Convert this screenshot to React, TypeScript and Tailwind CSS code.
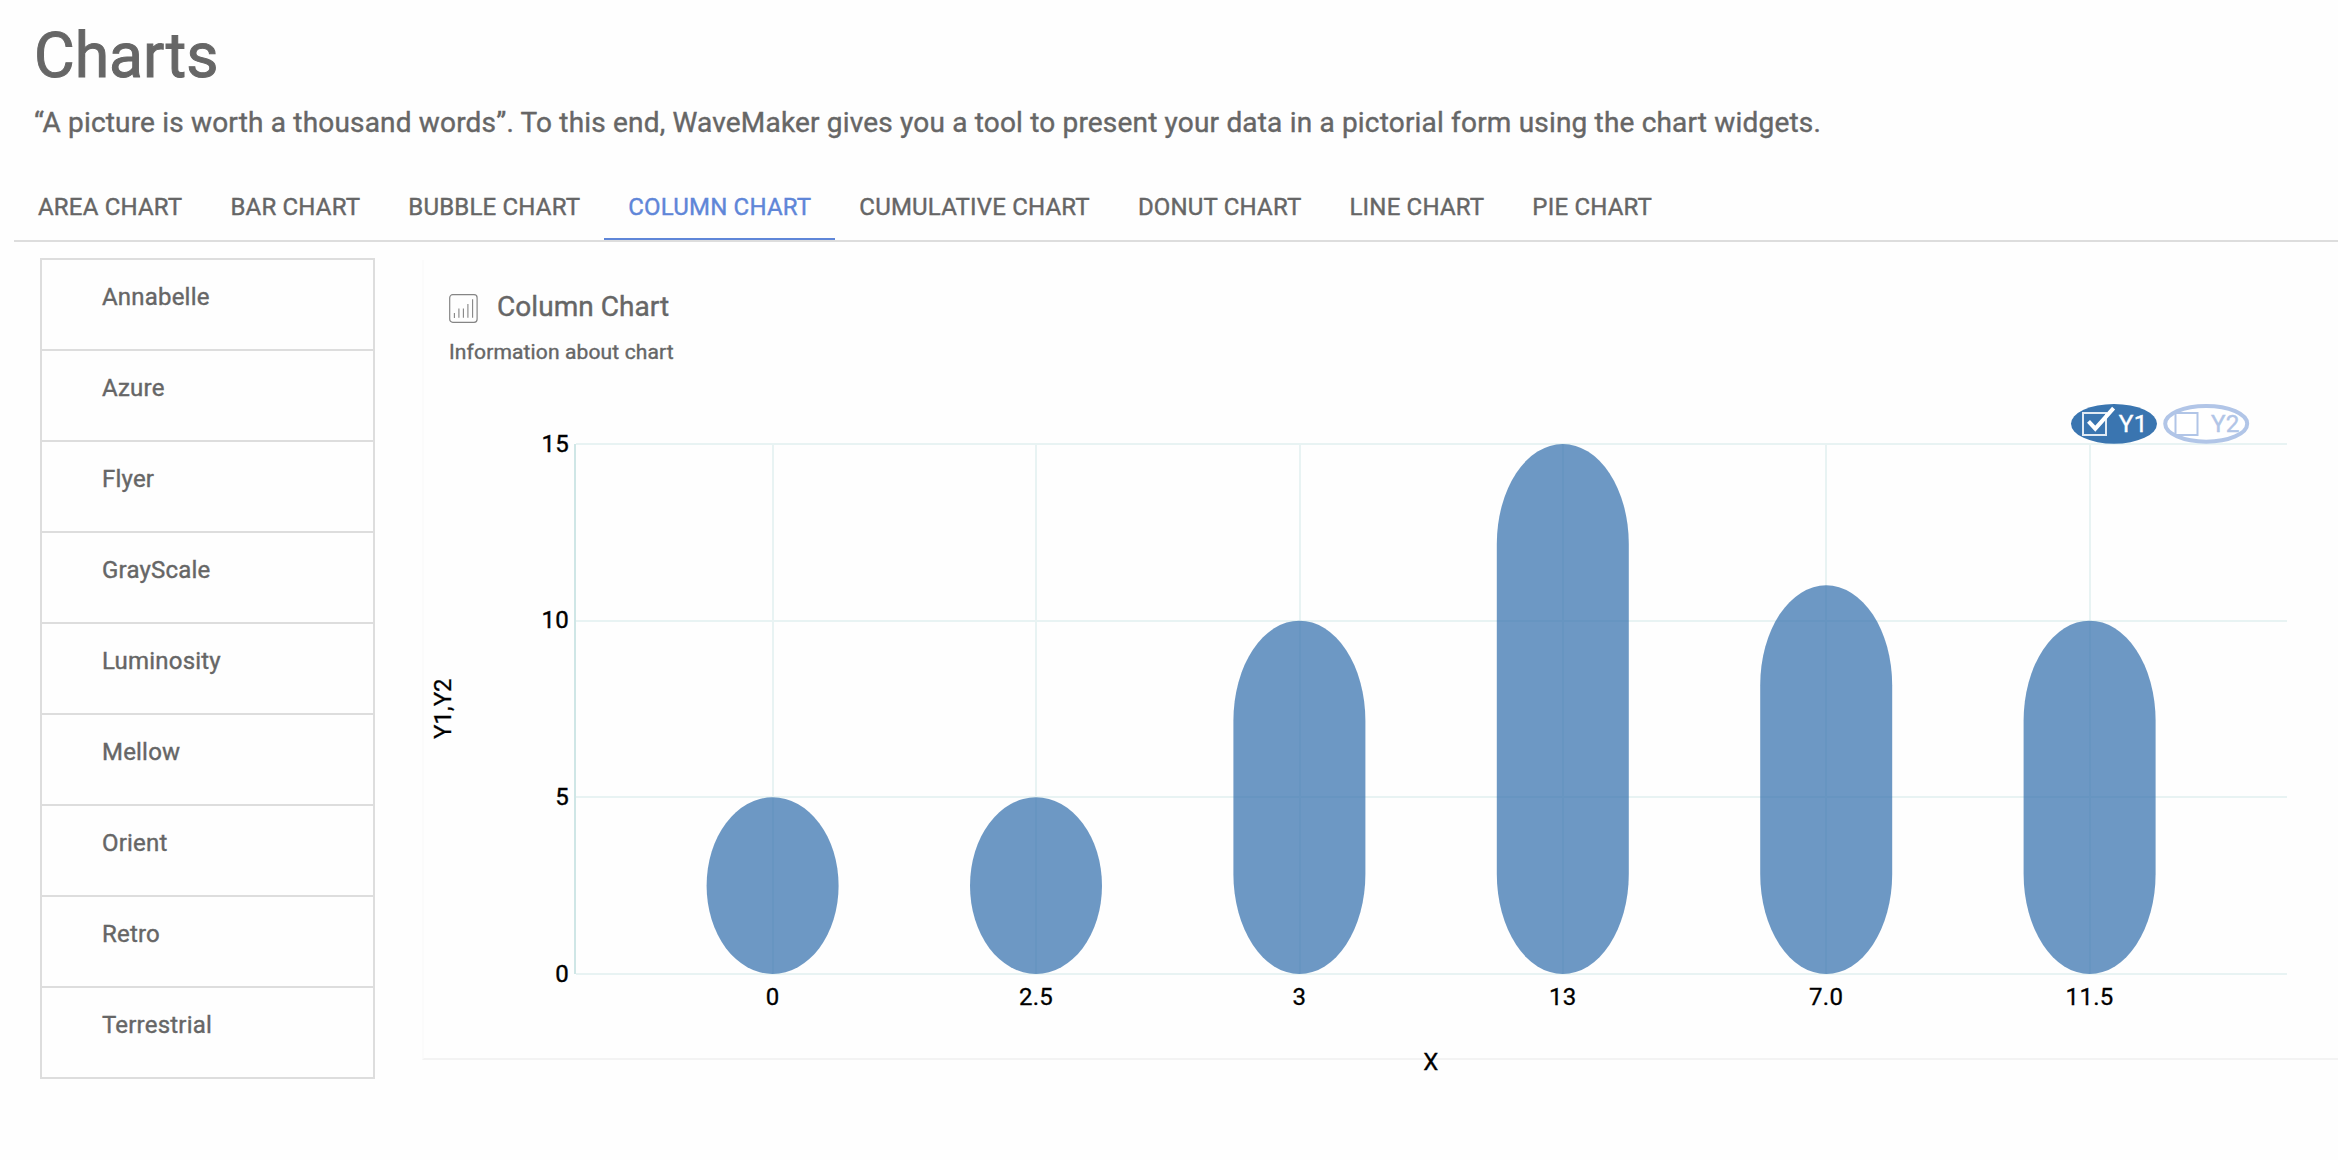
import React from 'react';

const tabs = [
  'AREA CHART',
  'BAR CHART',
  'BUBBLE CHART',
  'COLUMN CHART',
  'CUMULATIVE CHART',
  'DONUT CHART',
  'LINE CHART',
  'PIE CHART',
];

const themes = ['Annabelle', 'Azure', 'Flyer', 'GrayScale', 'Luminosity', 'Mellow', 'Orient', 'Retro', 'Terrestrial'];

const columns = [
  { label: '0', value: 5 },
  { label: '2.5', value: 5 },
  { label: '3', value: 10 },
  { label: '13', value: 15 },
  { label: '7.0', value: 11 },
  { label: '11.5', value: 10 },
];

const ticks = [15, 10, 5, 0];

const yOf = (v: number) => 974 - (v * 530) / 15;
const xOf = (i: number) => 772.8 + i * 263.4;

function TabBar({ active }: { active: string }) {
  return (
    <nav className="ml-3.5 mt-[29px] flex border-b-2 border-[#dddddd]">
      {tabs.map((t) => (
        <a
          key={t}
          className={
            t === active
              ? 'border-b-2 border-[#5f86d8] px-6 pb-[13px] pt-[17px] text-2xl leading-9 tracking-[0.19px] text-[#5f86d8]'
              : 'border-b-2 border-transparent px-6 pb-[13px] pt-[17px] text-2xl leading-9 tracking-[0.19px]'
          }
        >
          {t}
        </a>
      ))}
    </nav>
  );
}

function ChartIcon() {
  return (
    <svg className="mt-[7px] shrink-0" width="29" height="29" viewBox="0 0 29 29" fill="none" stroke="#858585">
      <rect x="0.7" y="0.7" width="27.4" height="27.6" rx="3" strokeWidth="1.2" />
      <path d="M5.4 19v5M9.9 14.5v9.2M14.4 14.5v9.2M18.9 10v13.7M23.6 5.3v18.4" strokeWidth="1.1" />
    </svg>
  );
}

function Legend() {
  return (
    <g>
      <ellipse cx="2114" cy="423.8" rx="43" ry="19.9" fill="#3a75b0" />
      <rect x="2083" y="413" width="23" height="22" fill="none" stroke="#fff" strokeWidth="2" strokeOpacity="0.85" />
      <path d="M2088.5 421.3l6.8 7.4 18.3-20.6" fill="none" stroke="#fff" strokeWidth="4" />
      <text x="2118.8" y="432" fontSize="24.4" letterSpacing="0.2" fill="#fff" stroke="#fff" strokeWidth="0.4">
        Y1
      </text>
      <ellipse cx="2206.2" cy="423.8" rx="41" ry="17.9" fill="#fff" stroke="#b1c5e7" strokeWidth="4" />
      <rect x="2175.5" y="413" width="22" height="22" fill="#fff" stroke="#b1c5e7" strokeWidth="2" />
      <text x="2211" y="432" fontSize="24.2" letterSpacing="0.1" fill="#b1c5e7" stroke="#b1c5e7" strokeWidth="0.4">
        Y2
      </text>
    </g>
  );
}

function ColumnChart() {
  return (
    <svg
      className="block overflow-visible"
      width="1914"
      height="678"
      viewBox="424 380 1914 678"
      fontFamily="Roboto, sans-serif"
      fontSize="24"
    >
      {ticks.map((t) => (
        <line key={t} x1="576" x2="2287" y1={Math.round(yOf(t))} y2={Math.round(yOf(t))} stroke="#e8f3f3" strokeWidth="2" />
      ))}
      {columns.map((c, i) => (
        <line key={c.label} x1={Math.round(xOf(i))} x2={Math.round(xOf(i))} y1="444" y2="974" stroke="#e8f3f3" strokeWidth="2" />
      ))}
      <line x1="575" x2="575" y1="444" y2="974" stroke="#cfe6e6" strokeWidth="2" />
      {columns.map((c, i) => (
        <rect
          key={c.label}
          x={xOf(i) - 66.2}
          y={yOf(c.value)}
          width="132"
          height={974 - yOf(c.value)}
          rx="66"
          ry={Math.min(100, (974 - yOf(c.value)) / 2)}
          fill="#3c76b0"
          fillOpacity="0.75"
        />
      ))}
      <g fill="#000" stroke="#000" strokeWidth="0.4" letterSpacing="0.4">
        {ticks.map((t) => (
          <text key={t} x="569.2" y={yOf(t) + 7.6} textAnchor="end">
            {t}
          </text>
        ))}
      </g>
      <g fill="#000" stroke="#000" strokeWidth="0.3" letterSpacing="0.3">
        {columns.map((c, i) => (
          <text key={c.label} x={xOf(i) - 0.2} y="1004.7" textAnchor="middle">
            {c.label}
          </text>
        ))}
        <text x="1431" y="1069.6" textAnchor="middle">
          X
        </text>
        <text transform="translate(451.3 708.7) rotate(-90)" textAnchor="middle" letterSpacing="0">
          Y1,Y2
        </text>
      </g>
      <Legend />
    </svg>
  );
}

export default function App() {
  return (
    <div className="h-[1160px] w-full overflow-hidden bg-[#fefefe] pt-5 font-[Roboto,sans-serif] text-[#666666] [-webkit-text-stroke:0.4px]">
      <header className="pl-[34px]">
        <h1 className="text-[62.5px] leading-[71px] [-webkit-text-stroke:1px]">Charts</h1>
        <p className="mt-3 text-[28px] leading-10 tracking-[0.18px]">
          “A picture is worth a thousand words”. To this end, WaveMaker gives you a tool to present your data in a
          pictorial form using the chart widgets.
        </p>
      </header>
      <TabBar active="COLUMN CHART" />
      <div className="mt-4 flex items-start">
        <ul className="ml-10 w-[335px] shrink-0 border-x-2 border-t-2 border-[#dddddd]">
          {themes.map((t) => (
            <li
              key={t}
              className="h-[91px] border-b-2 border-[#dddddd] pl-[60px] pt-[19px] text-2xl leading-9 tracking-[0.2px]"
            >
              {t}
            </li>
          ))}
        </ul>
        <section className="ml-[47px] mt-0.5 h-[800px] grow border-b-2 border-l-2 border-b-[#f3f3f3] border-l-[#fbfbfb]">
          <div className="h-[120px] pl-[25px] pt-[27px]">
            <div className="flex items-start gap-[19px]">
              <ChartIcon />
              <h2 className="text-[28px] leading-10 tracking-[0.05px]">Column Chart</h2>
            </div>
            <p className="mt-2.5 text-[21px] leading-[30px] tracking-[0.14px]">Information about chart</p>
          </div>
          <ColumnChart />
        </section>
      </div>
    </div>
  );
}
